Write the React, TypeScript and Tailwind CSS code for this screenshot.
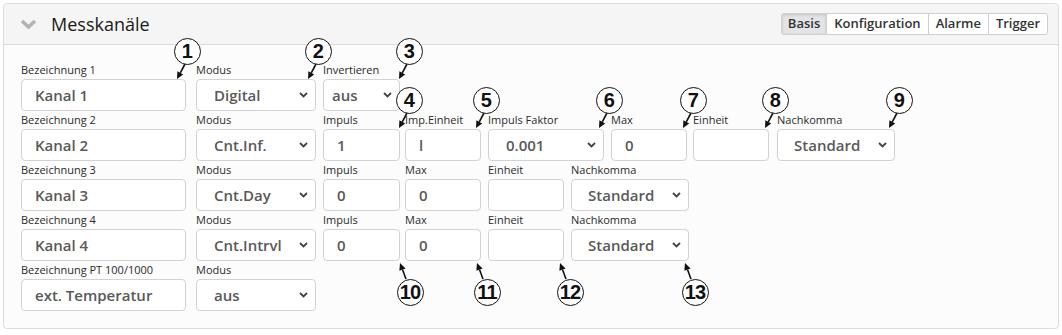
import React from "react";

type FieldProps = {
  label: string;
  cls: string;
  children: React.ReactNode;
};

function Field({ label, cls, children }: FieldProps) {
  return (
    <div className={"flex flex-col shrink-0 " + cls}>
      <div className="h-[18px] text-[11px] leading-[18px] text-[#2a2a2a] whitespace-nowrap">{label}</div>
      {children}
    </div>
  );
}

function TextBox({ value }: { value: string }) {
  return (
    <div className="h-[32px] border border-[#d2d2d2] rounded-[4px] bg-white flex items-center pl-[13px] text-[15px] font-semibold text-[#595959] whitespace-nowrap overflow-hidden">
      {value}
    </div>
  );
}

function Chevron() {
  return (
    <svg width="9" height="6" viewBox="0 0 9 6" className="shrink-0">
      <path d="M1 1 L4.5 4.5 L8 1" fill="none" stroke="#444" strokeWidth="1.8" />
    </svg>
  );
}

function SelectBox({ value, pl }: { value: string; pl: string }) {
  return (
    <div
      className={
        "h-[32px] border border-[#d2d2d2] rounded-[4px] bg-white flex items-center justify-between pr-[7px] text-[15px] font-semibold text-[#595959] whitespace-nowrap overflow-hidden " +
        pl
      }
    >
      <span>{value}</span>
      <Chevron />
    </div>
  );
}

type Callout = { n: number; cx: number; cy: number; up?: boolean };

const callouts: Callout[] = [
  { n: 1, cx: 187, cy: 51 },
  { n: 2, cx: 318, cy: 51 },
  { n: 3, cx: 409, cy: 51 },
  { n: 4, cx: 409, cy: 100 },
  { n: 5, cx: 486, cy: 100 },
  { n: 6, cx: 609, cy: 100 },
  { n: 7, cx: 693, cy: 100 },
  { n: 8, cx: 775, cy: 100 },
  { n: 9, cx: 899, cy: 100 },
  { n: 10, cx: 410, cy: 292, up: true },
  { n: 11, cx: 487, cy: 292, up: true },
  { n: 12, cx: 570, cy: 292, up: true },
  { n: 13, cx: 695, cy: 292, up: true },
];

function Arrow({ c }: { c: Callout }) {
  const x1 = c.up ? c.cx - 4 : c.cx - 2;
  const y1 = c.up ? c.cy - 13 : c.cy + 13;
  const x2 = c.cx - 10;
  const y2 = c.up ? c.cy - 29 : c.cy + 28;
  const dx = x2 - x1;
  const dy = y2 - y1;
  const len = Math.sqrt(dx * dx + dy * dy);
  const ux = dx / len;
  const uy = dy / len;
  const hl = 7;
  const hw = 3.3;
  const bx = x2 - ux * hl;
  const by = y2 - uy * hl;
  const px = -uy;
  const py = ux;
  const pts = `${x2},${y2} ${bx + px * hw},${by + py * hw} ${bx - px * hw},${by - py * hw}`;
  return (
    <g>
      <line x1={x1} y1={y1} x2={bx} y2={by} stroke="#111" strokeWidth="1.6" />
      <polygon points={pts} fill="#111" />
    </g>
  );
}

export default function App() {
  return (
    <div className="relative w-[1062px] h-[335px] bg-white font-['Open_Sans',sans-serif] overflow-hidden">
      <div className="mt-[3px] ml-[3px] w-[1056px] border border-[#dcdcdc] rounded-[4px] bg-[#fcfcfc]">
        {/* Header */}
        <div className="h-[41px] border-b border-[#dcdcdc] bg-[#f5f5f5] rounded-t-[4px] flex items-center pl-[16px] pr-[10px]">
          <svg width="17" height="10" viewBox="0 0 17 10" className="shrink-0">
            <path d="M2 2 L8.5 8 L15 2" fill="none" stroke="#b3b3b3" strokeWidth="3.6" />
          </svg>
          <div className="ml-[14px] text-[18px] leading-none text-[#1a1a1a]">Messkanäle</div>
          <div className="ml-auto flex h-[22px] border border-[#cfcfcf] rounded-[3px] text-[13px] font-semibold text-[#333] overflow-hidden">
            <div className="px-[6px] flex items-center bg-[#e4e4e4] shadow-[inset_0_1px_3px_rgba(0,0,0,0.15)]">Basis</div>
            <div className="px-[7px] flex items-center bg-white border-l border-[#cfcfcf]">Konfiguration</div>
            <div className="px-[7px] flex items-center bg-white border-l border-[#cfcfcf]">Alarme</div>
            <div className="px-[7px] flex items-center bg-white border-l border-[#cfcfcf]">Trigger</div>
          </div>
        </div>

        {/* Body */}
        <div className="pt-[16px] pb-[17px] pl-[17px] flex flex-col">
          {/* Row 1 */}
          <div className="flex">
            <Field label="Bezeichnung 1" cls="w-[165px]">
              <TextBox value="Kanal 1" />
            </Field>
            <Field label="Modus" cls="ml-[10px] w-[120px]">
              <SelectBox value="Digital" pl="pl-[17px]" />
            </Field>
            <Field label="Invertieren" cls="ml-[7px] w-[77px]">
              <SelectBox value="aus" pl="pl-[8px]" />
            </Field>
          </div>
          {/* Row 2 */}
          <div className="flex">
            <Field label="Bezeichnung 2" cls="w-[165px]">
              <TextBox value="Kanal 2" />
            </Field>
            <Field label="Modus" cls="ml-[10px] w-[120px]">
              <SelectBox value="Cnt.Inf." pl="pl-[17px]" />
            </Field>
            <Field label="Impuls" cls="ml-[7px] w-[77px]">
              <TextBox value="1" />
            </Field>
            <Field label="Imp.Einheit" cls="ml-[5px] w-[76px]">
              <TextBox value="l" />
            </Field>
            <Field label="Impuls Faktor" cls="ml-[7px] w-[116px]">
              <SelectBox value="0.001" pl="pl-[17px]" />
            </Field>
            <Field label="Max" cls="ml-[7px] w-[76px]">
              <TextBox value="0" />
            </Field>
            <Field label="Einheit" cls="ml-[6px] w-[76px]">
              <TextBox value="" />
            </Field>
            <Field label="Nachkomma" cls="ml-[8px] w-[118px]">
              <SelectBox value="Standard" pl="pl-[16px]" />
            </Field>
          </div>
          {/* Row 3 */}
          <div className="flex">
            <Field label="Bezeichnung 3" cls="w-[165px]">
              <TextBox value="Kanal 3" />
            </Field>
            <Field label="Modus" cls="ml-[10px] w-[120px]">
              <SelectBox value="Cnt.Day" pl="pl-[17px]" />
            </Field>
            <Field label="Impuls" cls="ml-[7px] w-[77px]">
              <TextBox value="0" />
            </Field>
            <Field label="Max" cls="ml-[5px] w-[76px]">
              <TextBox value="0" />
            </Field>
            <Field label="Einheit" cls="ml-[7px] w-[76px]">
              <TextBox value="" />
            </Field>
            <Field label="Nachkomma" cls="ml-[7px] w-[118px]">
              <SelectBox value="Standard" pl="pl-[16px]" />
            </Field>
          </div>
          {/* Row 4 */}
          <div className="flex">
            <Field label="Bezeichnung 4" cls="w-[165px]">
              <TextBox value="Kanal 4" />
            </Field>
            <Field label="Modus" cls="ml-[10px] w-[120px]">
              <SelectBox value="Cnt.Intrvl" pl="pl-[17px]" />
            </Field>
            <Field label="Impuls" cls="ml-[7px] w-[77px]">
              <TextBox value="0" />
            </Field>
            <Field label="Max" cls="ml-[5px] w-[76px]">
              <TextBox value="0" />
            </Field>
            <Field label="Einheit" cls="ml-[7px] w-[76px]">
              <TextBox value="" />
            </Field>
            <Field label="Nachkomma" cls="ml-[7px] w-[118px]">
              <SelectBox value="Standard" pl="pl-[16px]" />
            </Field>
          </div>
          {/* Row 5 */}
          <div className="flex">
            <Field label="Bezeichnung PT 100/1000" cls="w-[165px]">
              <TextBox value="ext. Temperatur" />
            </Field>
            <Field label="Modus" cls="ml-[10px] w-[120px]">
              <SelectBox value="aus" pl="pl-[17px]" />
            </Field>
          </div>
        </div>
      </div>

      {/* Callout arrows */}
      <svg className="absolute left-0 top-0 pointer-events-none" width="1062" height="335" viewBox="0 0 1062 335">
        {callouts.map((c) => (
          <Arrow key={c.n} c={c} />
        ))}
      </svg>
      {/* Callout circles */}
      {callouts.map((c) => (
        <div
          key={c.n}
          className="absolute w-[27px] h-[27px] rounded-full border-[1.5px] border-[#111] bg-white flex items-center justify-center font-['Liberation_Sans',Arial,sans-serif] font-bold text-[20px] leading-none text-[#111] tracking-[-0.8px]"
          style={{ left: c.cx - 13.5, top: c.cy - 13.5 }}
        >
          {c.n}
        </div>
      ))}
    </div>
  );
}
